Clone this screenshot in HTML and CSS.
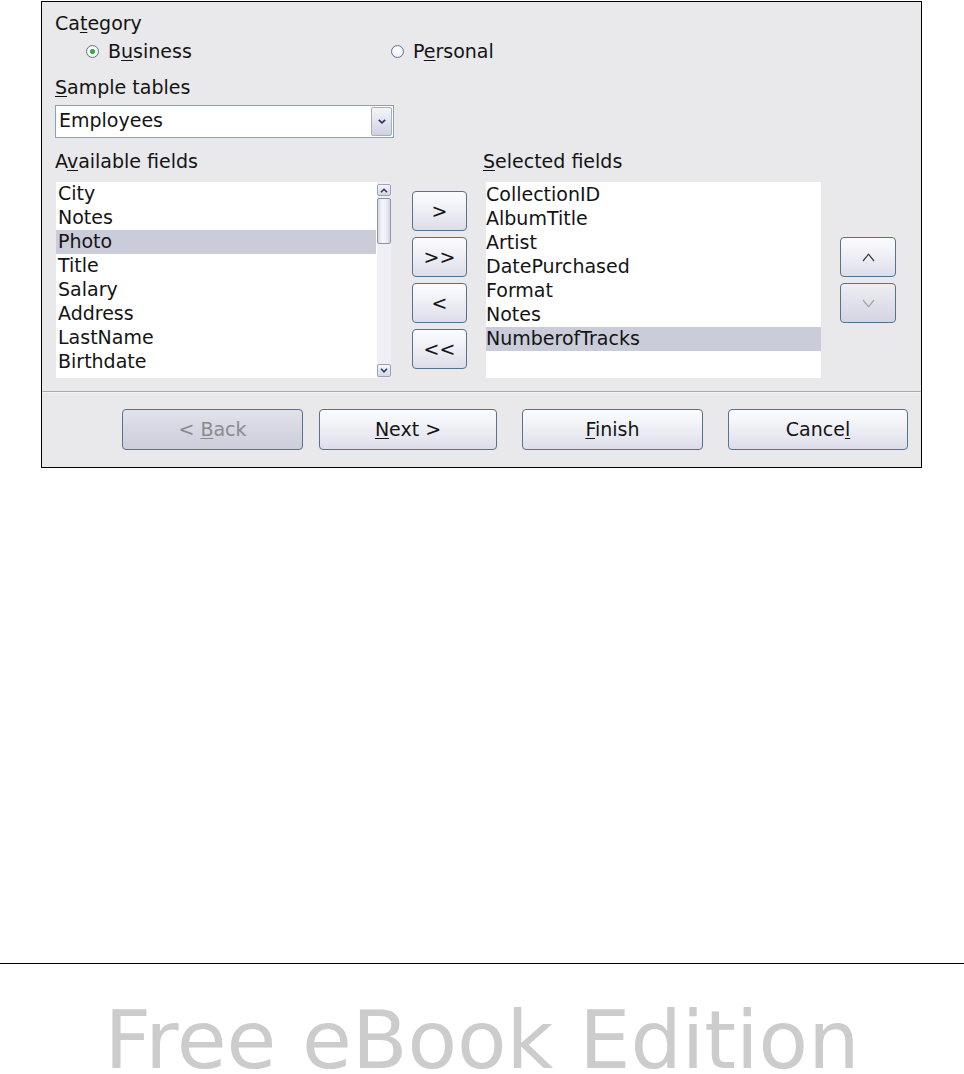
FILE: index.html
```html
<!DOCTYPE html>
<html>
<head>
<meta charset="utf-8">
<title>Table Wizard</title>
<link rel="stylesheet" href="styles.css">
</head>
<body>
<div class="page">
  <div class="dialog">
    <div class="content">
      <div class="label">Ca<u>t</u>egory</div>
      <div class="radio-row">
        <div class="radio radio-first"><span class="radio-circle checked"></span><span>B<u>u</u>siness</span></div>
        <div class="radio"><span class="radio-circle"></span><span>P<u>e</u>rsonal</span></div>
      </div>
      <div class="label label-sample"><u>S</u>ample tables</div>
      <div class="select">
        <span class="select-value">Employees</span>
        <span class="select-btn"><svg width="10" height="7" viewBox="0 0 10 7"><polyline points="1.8,1.8 5,4.8 8.2,1.8" fill="none" stroke="#2b3b68" stroke-width="1.8"/></svg></span>
      </div>
      <div class="fields">
        <div class="col col-avail">
          <div class="label">A<u>v</u>ailable fields</div>
          <div class="listbox listbox-avail">
            <ul class="items items-avail">
              <li class="item">City</li>
              <li class="item">Notes</li>
              <li class="item selected">Photo</li>
              <li class="item">Title</li>
              <li class="item">Salary</li>
              <li class="item">Address</li>
              <li class="item">LastName</li>
              <li class="item">Birthdate</li>
            </ul>
            <div class="scrollbar">
              <div class="sb-btn sb-up"><svg width="8" height="5" viewBox="0 0 8 5"><polyline points="1,4.3 4,1.3 7,4.3" fill="none" stroke="#2b3b68" stroke-width="1.6"/></svg></div>
              <div class="sb-thumb"></div>
              <div class="sb-track"></div>
              <div class="sb-btn sb-down"><svg width="8" height="5" viewBox="0 0 8 5"><polyline points="1,0.8 4,3.8 7,0.8" fill="none" stroke="#2b3b68" stroke-width="1.6"/></svg></div>
            </div>
          </div>
        </div>
        <div class="col col-move">
          <button class="btn btn-small">&gt;</button>
          <button class="btn btn-small">&gt;&gt;</button>
          <button class="btn btn-small">&lt;</button>
          <button class="btn btn-small">&lt;&lt;</button>
        </div>
        <div class="col col-sel">
          <div class="label"><u>S</u>elected fields</div>
          <div class="listbox listbox-sel">
            <ul class="items items-sel">
              <li class="item">CollectionID</li>
              <li class="item">AlbumTitle</li>
              <li class="item">Artist</li>
              <li class="item">DatePurchased</li>
              <li class="item">Format</li>
              <li class="item">Notes</li>
              <li class="item selected">NumberofTracks</li>
            </ul>
          </div>
        </div>
        <div class="col col-order">
          <button class="btn btn-small btn-order"><svg width="13" height="9" viewBox="0 0 13 9"><polyline points="1,8 6.5,1.2 12,8" fill="none" stroke="#3a3a3a" stroke-width="1.2"/></svg></button>
          <button class="btn btn-small btn-order btn-disabled"><svg width="13" height="9" viewBox="0 0 13 9"><polyline points="1,1 6.5,7.8 12,1" fill="none" stroke="#a2a2a8" stroke-width="1.2"/></svg></button>
        </div>
      </div>
    </div>
    <div class="separator"></div>
    <div class="actions">
      <div class="nav-group">
        <button class="btn btn-action btn-back btn-disabled"><span>&lt; <u>B</u>ack</span></button>
        <button class="btn btn-action btn-next"><span><u>N</u>ext &gt;</span></button>
      </div>
      <button class="btn btn-action btn-finish"><span><u>F</u>inish</span></button>
      <button class="btn btn-action btn-cancel"><span>Cance<u>l</u></span></button>
    </div>
  </div>
  <div class="footer">Free eBook Edition</div>
</div>
</body>
</html>
```

FILE: styles.css
```css
* { box-sizing: border-box; }

html, body {
  margin: 0;
  padding: 0;
  background: #ffffff;
}

body {
  font-family: "DejaVu Sans", "Liberation Sans", sans-serif;
  font-size: 19px;
  color: #141414;
}

.page {
  height: 1074px;
  display: flex;
  flex-direction: column;
  overflow: hidden;
}

.dialog {
  margin: 1px 0 0 41px;
  width: 881px;
  border: 1px solid #000;
  background: #e9e9eb;
}

.content {
  padding: 9px 13px 13px 13px;
}

.label {
  line-height: 24px;
  white-space: nowrap;
}

u {
  text-decoration-thickness: 1px;
  text-underline-offset: 2px;
}

/* radio buttons */
.radio-row {
  display: flex;
  margin-top: 4px;
  padding-left: 31px;
  line-height: 24px;
}

.radio {
  display: flex;
  align-items: center;
  white-space: nowrap;
}

.radio-first {
  width: 305px;
}

.radio-circle {
  width: 13px;
  height: 13px;
  border-radius: 50%;
  border: 1px solid #5f7391;
  background: radial-gradient(circle at 50% 45%, #ffffff 0, #f4f5f9 55%, #dde0e8 100%);
  margin-right: 9px;
  margin-top: 1px;
  flex: none;
}

.radio-circle.checked {
  background: radial-gradient(circle at 50% 50%, #3aac45 0, #3aac45 2.2px, #ffffff 2.9px, #f1f2f6 70%, #dde0e8 100%);
}

.label-sample {
  margin-top: 12px;
}

/* dropdown */
.select {
  margin-top: 6px;
  width: 339px;
  height: 33px;
  border: 1px solid #8aa0bf;
  background: #fff;
  display: flex;
  align-items: stretch;
  padding: 1px 1px 1px 3px;
}

.select-value {
  flex: 1;
  line-height: 27px;
}

.select-btn {
  width: 21px;
  border: 1px solid #a4aec4;
  border-radius: 2px;
  background: linear-gradient(to bottom, #f4f4f9 0%, #e3e4ee 50%, #cfd1e0 100%);
  display: flex;
  align-items: center;
  justify-content: center;
}

/* field lists */
.fields {
  display: flex;
  margin-top: 11px;
}

.col {
  flex: none;
}

.col-avail { width: 337px; }

.col-move {
  margin-left: 20px;
  width: 55px;
  display: flex;
  flex-direction: column;
  gap: 6px;
  padding-top: 42px;
}

.col-sel {
  margin-left: 16px;
  width: 338px;
}

.col-order {
  margin-left: 19px;
  width: 56px;
  display: flex;
  flex-direction: column;
  gap: 6px;
  padding-top: 88px;
}

.listbox {
  height: 196px;
  margin-top: 9px;
  background: #fff;
  display: flex;
}

.listbox-avail {
  margin-left: 1px;
  width: 335px;
}

.listbox-sel {
  margin-left: 3px;
  width: 335px;
}

.items {
  list-style: none;
  margin: 0;
  padding: 0;
  flex: none;
}

.items-avail { width: 320px; }
.items-sel { width: 335px; padding-top: 1px; }

.item {
  height: 24px;
  line-height: 22px;
  white-space: nowrap;
}

.items-avail .item { padding-left: 2px; }
.items-sel .item { padding-left: 0; }

.item.selected {
  background: #cbccda;
}

/* scrollbar */
.scrollbar {
  width: 14px;
  margin-left: 1px;
  background: #eff0f7;
  display: flex;
  flex-direction: column;
}

.sb-btn {
  height: 12px;
  border: 1px solid #98a2ba;
  border-radius: 2px;
  background: linear-gradient(to bottom, #f6f6fa, #d5d8e5);
  display: flex;
  align-items: center;
  justify-content: center;
}

.sb-up { margin-top: 2px; }
.sb-down { margin-bottom: 1px; height: 13px; }

.sb-thumb {
  margin-top: 2px;
  height: 46px;
  border: 1px solid #8b95ae;
  border-radius: 2px;
  background: linear-gradient(to right, #d3d6e3 0%, #f7f7fb 35%, #eceef5 70%, #cfd2df 100%);
}

.sb-track {
  flex: 1;
}

/* buttons */
.btn {
  font-family: inherit;
  font-size: 19px;
  color: #141414;
  border: 1px solid #57728f;
  border-radius: 4px;
  background: linear-gradient(to bottom, #fcfcff 0%, #eff0f6 45%, #dcdde9 100%);
  padding: 0;
  margin: 0;
  display: flex;
  align-items: center;
  justify-content: center;
  line-height: 1;
  white-space: nowrap;
}

.btn-small {
  width: 100%;
  height: 40px;
}

.btn-disabled {
  color: #8a8a8e;
  background: linear-gradient(to bottom, #e2e2ea 0%, #d6d7e2 50%, #cdcedb 100%);
}

.btn-order.btn-disabled {
  background: linear-gradient(to bottom, #eeeef4 0%, #e0e1ea 50%, #d3d4e0 100%);
}

/* separator + action row */
.separator {
  height: 2px;
  border-top: 1px solid #a9a9ad;
  border-bottom: 1px solid #f4f4f6;
}

.actions {
  display: flex;
  justify-content: flex-end;
  gap: 25px;
  padding: 16px 13px 17px 0;
}

.nav-group {
  display: flex;
  gap: 16px;
}

.btn-action { height: 41px; }
.btn-back { width: 181px; }
.btn-next { width: 178px; }
.btn-finish { width: 181px; }
.btn-cancel { width: 180px; }

/* footer */
.footer {
  margin-top: auto;
  height: 111px;
  border-top: 1px solid #000;
  padding-top: 46px;
  text-align: center;
  font-family: "DejaVu Sans", sans-serif;
  font-size: 81px;
  line-height: 60px;
  color: #cccccc;
  white-space: nowrap;
}
```
